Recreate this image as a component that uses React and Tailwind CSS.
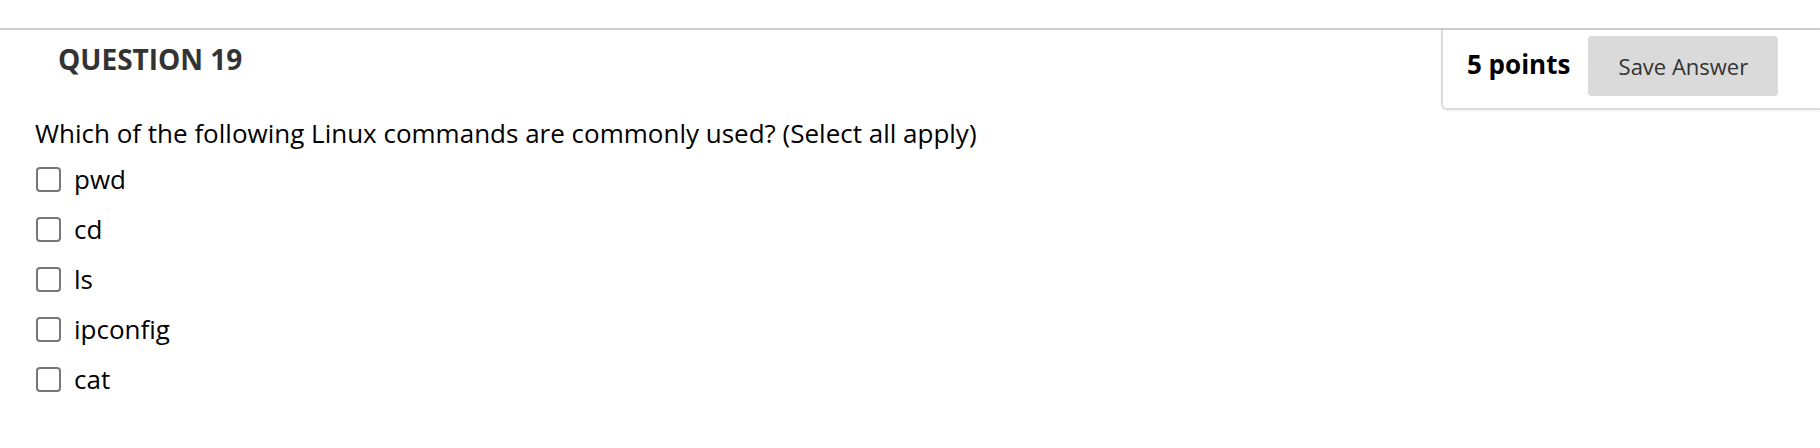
const options = ["pwd", "cd", "ls", "ipconfig", "cat"];

export default function App() {
  return (
    <div className="min-h-[448px] w-[1820px] bg-white font-['Open_Sans',sans-serif] text-black">
      <div className="h-[28px]" />
      <div className="border-t-2 border-[#cdcdcd]">
        {/* HEADER */}
        <div className="flex items-start">
          <h2 className="pl-[58px] pt-[10px] text-[28px] font-bold leading-[38px] text-[#333]">
            QUESTION 19
          </h2>
          <div className="ml-auto flex h-[80px] w-[379px] items-start gap-[18px] rounded-bl-[6px] border-b-2 border-l-2 border-[#dcdcdc] pl-[24px] pt-[6px] shadow-[0_1px_3px_rgba(0,0,0,0.06)]">
            <span className="mt-[11px] text-[26px] font-bold leading-[34px]">
              5 points
            </span>
            <button className="h-[60px] w-[190px] rounded-[4px] bg-[#dadada] text-[22px] text-[#333]">
              Save Answer
            </button>
          </div>
        </div>

        {/* QUESTION */}
        <div className="mt-[4px] pl-[35px]">
          <p className="text-[26px] leading-[38px]">
            Which of the following Linux commands are commonly used? (Select all apply)
          </p>
          <ul className="mt-[2px] flex flex-col">
            {options.map((opt) => (
              <li key={opt} className="flex h-[50px] items-center">
                <span className="ml-[1px] h-[25px] w-[25px] rounded-[4px] border-2 border-[#777] bg-white" />
                <span className="ml-[13px] text-[26px] leading-[38px]">{opt}</span>
              </li>
            ))}
          </ul>
        </div>
      </div>
    </div>
  );
}
